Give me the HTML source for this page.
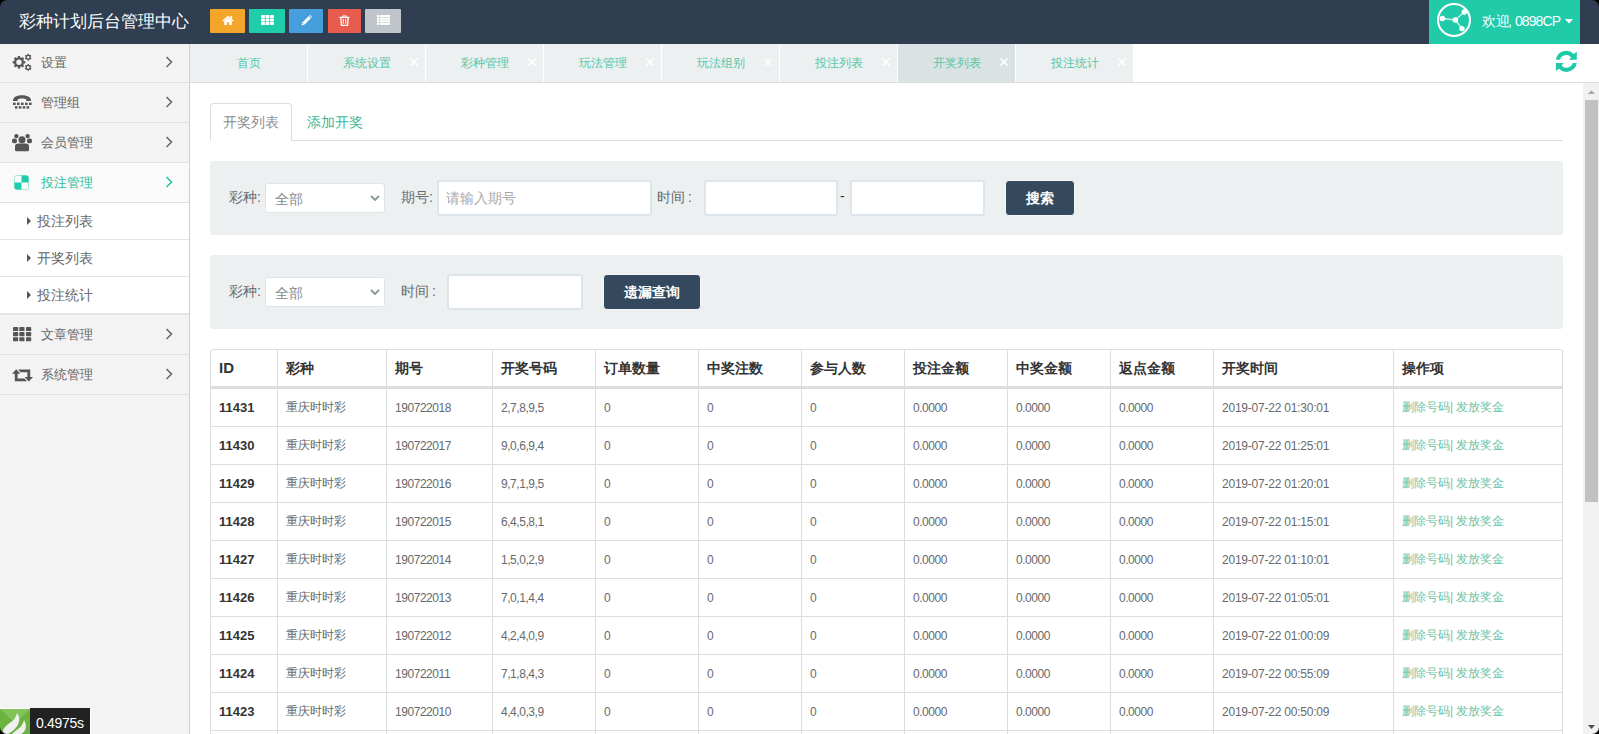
<!DOCTYPE html>
<html><head><meta charset="utf-8">
<style>
*{box-sizing:border-box;margin:0;padding:0}
html,body{width:1599px;height:734px;overflow:hidden;background:#fff;font-family:"Liberation Sans",sans-serif;color:#676a6c}
.abs{position:absolute}
svg{display:block}
#hdr{position:absolute;left:0;top:0;width:1599px;height:44px;background:#2f3e50}
#hdr .title{position:absolute;left:19px;top:10px;font-size:17px;line-height:24px;color:#fff;white-space:nowrap}
.hb{position:absolute;top:9px;height:24px;border-radius:1px}
.hb svg{position:absolute}
#welcome{position:absolute;left:1429px;top:0;width:151px;height:44px;background:#21cbaa}
#welcome .txt{position:absolute;left:53px;top:12px;font-size:14px;line-height:18px;color:#fff;white-space:nowrap}
#side{position:absolute;left:0;top:44px;width:190px;height:690px;background:#f3f3f3;border-right:1px solid #cfcfcf}
.mi{position:absolute;left:0;width:189px;border-bottom:1px solid #e1e1e1;font-size:13px;color:#666}
.mi .t{position:absolute;left:41px;white-space:nowrap}
.mi .chev{position:absolute;left:165px;width:8px;height:12px}
.sub{position:absolute;left:0;width:189px;background:#fff;border-bottom:1px solid #e4e4e4;font-size:14px;color:#666}
.sub .t{position:absolute;left:37px;white-space:nowrap}
.sub .tri{position:absolute;left:27px;width:0;height:0;border-left:4px solid #555;border-top:4px solid transparent;border-bottom:4px solid transparent}
#tabs{position:absolute;left:190px;top:44px;width:1409px;height:39px;background:#fff;border-bottom:1px solid #dcdcdc}
.tab{position:absolute;top:0;height:38px;width:117px;background:#ecf0f1;font-size:12px;line-height:38px;color:#55c7a7;text-align:center}
.tab .x{position:absolute;right:6px;top:13px;width:10px;height:10px}
#content{position:absolute;left:190px;top:83px;width:1393px;height:651px;background:#fff;overflow:hidden}
#sb{position:absolute;left:1583px;top:83px;width:16px;height:651px;background:#f1f1f1}
.ic{position:absolute;display:block;line-height:0}
.mi.act{background:#fafafa;color:#2bbf9c}
.ntab{position:absolute;z-index:1;left:20px;top:20px;width:82px;height:38px;border:1px solid #ddd;border-bottom:none;border-radius:4px 4px 0 0;background:#fff;font-size:14px;color:#8c8c8c}
.nline{position:absolute;left:20px;top:57px;width:1353px;height:1px;background:#ddd}
.panel{position:absolute;left:20px;width:1353px;height:74px;background:#ecf0f1;border-radius:3px}
.lbl{position:absolute;font-size:14px;color:#676a6c;white-space:nowrap}
.sel{position:absolute;height:30px;background:#fff;border:1px solid #dde4ea;border-radius:3px;font-size:14px;color:#858a8c}
.inp{position:absolute;height:36px;background:#fff;border:2px solid #dde4ec;border-radius:3px;font-size:14px;color:#aaa}
.btn{position:absolute;height:36px;background:#34495e;border:1px solid #f7f9f9;border-radius:4px;color:#fff;font-size:14px;font-weight:bold;text-align:center;line-height:34px}
table.dt{position:absolute;left:20px;top:266px;border-collapse:separate;border-spacing:0;table-layout:fixed;width:1353px;border-top:1px solid #ddd;border-left:1px solid #ddd;border-radius:4px 4px 0 0}
.dt th,.dt td{border-right:1px solid #ddd;border-bottom:1px solid #ddd;text-align:left;padding:0 0 0 8px;white-space:nowrap;overflow:hidden}
.dt th{height:39px;padding-top:2px;font-size:14px;font-weight:bold;color:#333;border-bottom:3px solid #ddd}
.dt td{height:38px;font-size:12px;color:#676a6c}
.dt td.n{letter-spacing:-0.45px}
.dt td.d{letter-spacing:-0.22px}
.dt td.id{font-weight:bold;color:#333;font-size:13px;letter-spacing:0}
.dt td.op{color:#6ec2a5}
.corner{position:absolute;width:8px;height:8px}
</style></head><body>
<div id="hdr">
  <div class="title">彩种计划后台管理中心</div>
  <div class="hb" style="left:210px;width:35px;background:#f4a62a"><svg width="12" height="10" viewBox="0 0 12 10" style="left:12px;top:6px"><path d="M0.3 5.6L6 0.8L11.7 5.6L10.9 6.5L6 2.4L1.1 6.5Z" fill="#fff"/><rect x="8.4" y="1" width="1.7" height="2.8" fill="#fff"/><path d="M2.2 5.8L6 2.7L9.8 5.8V10H7.1V7.2H4.9V10H2.2Z" fill="#fff"/></svg></div>
  <div class="hb" style="left:249px;width:36px;background:#1fcdaa"><svg width="13" height="10" viewBox="0 0 13 10" style="left:12px;top:6px"><rect x="0" y="0" width="3.9" height="3" rx="0.5" fill="#fff"/><rect x="0" y="3.5" width="3.9" height="3" rx="0.5" fill="#fff"/><rect x="0" y="7" width="3.9" height="3" rx="0.5" fill="#fff"/><rect x="4.5" y="0" width="3.9" height="3" rx="0.5" fill="#fff"/><rect x="4.5" y="3.5" width="3.9" height="3" rx="0.5" fill="#fff"/><rect x="4.5" y="7" width="3.9" height="3" rx="0.5" fill="#fff"/><rect x="9" y="0" width="3.9" height="3" rx="0.5" fill="#fff"/><rect x="9" y="3.5" width="3.9" height="3" rx="0.5" fill="#fff"/><rect x="9" y="7" width="3.9" height="3" rx="0.5" fill="#fff"/></svg></div>
  <div class="hb" style="left:289px;width:34px;background:#469fdc"><svg width="11" height="11" viewBox="0 0 11 11" style="left:12px;top:6px"><path d="M0.6 10.4L1.3 7.6L7.8 1.1L9.9 3.2L3.4 9.7Z" fill="#fff"/><path d="M8.5 0.4L9.1 -0.2L11.2 1.9L10.6 2.5Z" fill="#fff"/><path d="M1.3 7.6L3.4 9.7" stroke="#469fdc" stroke-width="0.6"/></svg></div>
  <div class="hb" style="left:328px;width:33px;background:#e85c4e"><svg width="11" height="11" viewBox="0 0 11 11" style="left:11px;top:6px"><path d="M0.5 2.4H10.5" stroke="#fff" stroke-width="1.3"/><path d="M3.8 2.2V0.9H7.2V2.2" fill="none" stroke="#fff" stroke-width="1"/><path d="M1.9 2.6L2.4 10.3H8.6L9.1 2.6" fill="none" stroke="#fff" stroke-width="1.3"/><path d="M4.3 4V8.8M6.7 4V8.8" stroke="#fff" stroke-width="1"/></svg></div>
  <div class="hb" style="left:365px;width:36px;background:#bfc5ca"><svg width="13" height="10" viewBox="0 0 13 10" style="left:12px;top:6px"><rect x="0" y="0" width="2.4" height="2.1" fill="#fff"/><rect x="2.9" y="0" width="10.1" height="2.1" fill="#fff"/><rect x="0" y="2.6" width="2.4" height="2.1" fill="#fff"/><rect x="2.9" y="2.6" width="10.1" height="2.1" fill="#fff"/><rect x="0" y="5.2" width="2.4" height="2.1" fill="#fff"/><rect x="2.9" y="5.2" width="10.1" height="2.1" fill="#fff"/><rect x="0" y="7.8" width="2.4" height="2.1" fill="#fff"/><rect x="2.9" y="7.8" width="10.1" height="2.1" fill="#fff"/></svg></div>
</div>
<div id="welcome"><svg width="36" height="36" viewBox="0 0 36 36" style="position:absolute;left:7px;top:2px"><circle cx="18" cy="18" r="16" fill="none" stroke="#fff" stroke-width="2"/><path d="M6.4 16.5L19.4 18L28.3 10M19.4 18L26 26.6" stroke="#fff" stroke-width="1.5" stroke-opacity="0.7" fill="none"/><circle cx="6.4" cy="16.5" r="2.8" fill="#fff"/><circle cx="19.4" cy="18" r="2.8" fill="#fff"/><circle cx="28.3" cy="10" r="2.7" fill="#fff"/><circle cx="26" cy="26.6" r="2.7" fill="#fff"/></svg><div class="txt">欢迎<span style="margin-left:-2px">,</span><span style="letter-spacing:-0.9px;margin-left:3px">0898CP</span></div><svg width="8" height="5" viewBox="0 0 8 5" style="position:absolute;left:136px;top:19px"><path d="M0 0H8L4 4.5Z" fill="#fff"/></svg></div>
<div id="side">
  <div class="mi" style="top:0;height:39px"><span class="ic" style="left:12px;top:9px"><svg width="21" height="19" viewBox="0 0 21 19" style=""><circle cx="7" cy="9.3" r="3.85" fill="none" stroke="#555" stroke-width="2.3"/><rect x="5.85" y="3.000000000000001" width="2.3" height="1.8" fill="#555" transform="rotate(0.0 7 9.3)"/><rect x="5.85" y="3.000000000000001" width="2.3" height="1.8" fill="#555" transform="rotate(45.0 7 9.3)"/><rect x="5.85" y="3.000000000000001" width="2.3" height="1.8" fill="#555" transform="rotate(90.0 7 9.3)"/><rect x="5.85" y="3.000000000000001" width="2.3" height="1.8" fill="#555" transform="rotate(135.0 7 9.3)"/><rect x="5.85" y="3.000000000000001" width="2.3" height="1.8" fill="#555" transform="rotate(180.0 7 9.3)"/><rect x="5.85" y="3.000000000000001" width="2.3" height="1.8" fill="#555" transform="rotate(225.0 7 9.3)"/><rect x="5.85" y="3.000000000000001" width="2.3" height="1.8" fill="#555" transform="rotate(270.0 7 9.3)"/><rect x="5.85" y="3.000000000000001" width="2.3" height="1.8" fill="#555" transform="rotate(315.0 7 9.3)"/><circle cx="16.2" cy="4.2" r="1.9500000000000002" fill="none" stroke="#555" stroke-width="1.3"/><rect x="15.5" y="0.8" width="1.4" height="1.3" fill="#555" transform="rotate(0.0 16.2 4.2)"/><rect x="15.5" y="0.8" width="1.4" height="1.3" fill="#555" transform="rotate(60.0 16.2 4.2)"/><rect x="15.5" y="0.8" width="1.4" height="1.3" fill="#555" transform="rotate(120.0 16.2 4.2)"/><rect x="15.5" y="0.8" width="1.4" height="1.3" fill="#555" transform="rotate(180.0 16.2 4.2)"/><rect x="15.5" y="0.8" width="1.4" height="1.3" fill="#555" transform="rotate(240.0 16.2 4.2)"/><rect x="15.5" y="0.8" width="1.4" height="1.3" fill="#555" transform="rotate(300.0 16.2 4.2)"/><circle cx="16.2" cy="14.4" r="1.9500000000000002" fill="none" stroke="#555" stroke-width="1.3"/><rect x="15.5" y="11.0" width="1.4" height="1.3" fill="#555" transform="rotate(0.0 16.2 14.4)"/><rect x="15.5" y="11.0" width="1.4" height="1.3" fill="#555" transform="rotate(60.0 16.2 14.4)"/><rect x="15.5" y="11.0" width="1.4" height="1.3" fill="#555" transform="rotate(120.0 16.2 14.4)"/><rect x="15.5" y="11.0" width="1.4" height="1.3" fill="#555" transform="rotate(180.0 16.2 14.4)"/><rect x="15.5" y="11.0" width="1.4" height="1.3" fill="#555" transform="rotate(240.0 16.2 14.4)"/><rect x="15.5" y="11.0" width="1.4" height="1.3" fill="#555" transform="rotate(300.0 16.2 14.4)"/></svg></span><span class="t" style="top:10px">设置</span><span class="chev" style="top:12px"><svg width="8" height="12" viewBox="0 0 8 12" style=""><path d="M1.5 1 L6.5 6 L1.5 11" fill="none" stroke="#666" stroke-width="1.5"/></svg></span></div>
  <div class="mi" style="top:39px;height:40px"><span class="ic" style="left:12px;top:11px"><svg width="20" height="16" viewBox="0 0 20 16" style=""><path d="M1 6.5C1 3.5 4 1.2 10 1.2C16 1.2 19 3.5 19 6.5V7H14.3V5.3C13 4.7 11.8 4.5 10 4.5C8.2 4.5 7 4.7 5.7 5.3V7H1Z" fill="#555"/><rect x="1" y="8.6" width="2.6" height="2.4" fill="#555"/><rect x="5" y="8.6" width="2.6" height="2.4" fill="#555"/><rect x="9" y="8.6" width="2.6" height="2.4" fill="#555"/><rect x="13" y="8.6" width="2.6" height="2.4" fill="#555"/><rect x="17" y="8.6" width="2.6" height="2.4" fill="#555"/><rect x="2.9" y="12.2" width="2.6" height="2.4" fill="#555"/><rect x="6.8" y="12.2" width="2.6" height="2.4" fill="#555"/><rect x="10.7" y="12.2" width="2.6" height="2.4" fill="#555"/><rect x="14.6" y="12.2" width="2.6" height="2.4" fill="#555"/></svg></span><span class="t" style="top:11px">管理组</span><span class="chev" style="top:13px"><svg width="8" height="12" viewBox="0 0 8 12" style=""><path d="M1.5 1 L6.5 6 L1.5 11" fill="none" stroke="#666" stroke-width="1.5"/></svg></span></div>
  <div class="mi" style="top:79px;height:40px"><span class="ic" style="left:12px;top:10px"><svg width="20" height="19" viewBox="0 0 20 19" style=""><circle cx="4.4" cy="3.1" r="2.2" fill="#555"/><circle cx="15.6" cy="3.1" r="2.2" fill="#555"/><rect x="0" y="5.6" width="5" height="4.6" rx="1.8" fill="#555"/><rect x="15" y="5.6" width="5" height="4.6" rx="1.8" fill="#555"/><circle cx="10" cy="6.7" r="3.5" fill="#555"/><path d="M3 13.2C3 11.5 4.5 10.6 6 10.6H14C15.5 10.6 17 11.5 17 13.2V17C17 17.8 16.4 18.2 15.6 18.2H4.4C3.6 18.2 3 17.8 3 17Z" fill="#555"/></svg></span><span class="t" style="top:11px">会员管理</span><span class="chev" style="top:13px"><svg width="8" height="12" viewBox="0 0 8 12" style=""><path d="M1.5 1 L6.5 6 L1.5 11" fill="none" stroke="#666" stroke-width="1.5"/></svg></span></div>
  <div class="mi act" style="top:119px;height:40px"><span class="ic" style="left:14px;top:12px"><svg width="15" height="15" viewBox="0 0 16 16" style=""><rect x="0.5" y="0.5" width="15" height="15" rx="2.5" fill="#fff" stroke="#9fe0d1" stroke-width="1"/><path d="M8 0.5H13A2.5 2.5 0 0 1 15.5 3V8H8Z" fill="#1fcdaa"/><path d="M0.5 8H8V15.5H3A2.5 2.5 0 0 1 0.5 13Z" fill="#1fcdaa"/></svg></span><span class="t" style="top:11px">投注管理</span><span class="chev" style="top:13px"><svg width="8" height="12" viewBox="0 0 8 12" style=""><path d="M1.5 1 L6.5 6 L1.5 11" fill="none" stroke="#1fc4a4" stroke-width="1.5"/></svg></span></div>
  <div class="sub" style="top:159px;height:37px"><span class="tri" style="top:14px"></span><span class="t" style="top:10px">投注列表</span></div>
  <div class="sub" style="top:196px;height:37px"><span class="tri" style="top:14px"></span><span class="t" style="top:10px">开奖列表</span></div>
  <div class="sub" style="top:233px;height:38px;border-bottom-width:2px"><span class="tri" style="top:14px"></span><span class="t" style="top:10px">投注统计</span></div>
  <div class="mi" style="top:271px;height:40px"><span class="ic" style="left:13px;top:12px"><svg width="19" height="15" viewBox="0 0 19 15" style=""><rect x="0" y="0" width="5.2" height="4.1" rx="0.7" fill="#555"/><rect x="0" y="5.1" width="5.2" height="4.1" rx="0.7" fill="#555"/><rect x="0" y="10.2" width="5.2" height="4.1" rx="0.7" fill="#555"/><rect x="6.3" y="0" width="5.2" height="4.1" rx="0.7" fill="#555"/><rect x="6.3" y="5.1" width="5.2" height="4.1" rx="0.7" fill="#555"/><rect x="6.3" y="10.2" width="5.2" height="4.1" rx="0.7" fill="#555"/><rect x="13" y="0" width="5.2" height="4.1" rx="0.7" fill="#555"/><rect x="13" y="5.1" width="5.2" height="4.1" rx="0.7" fill="#555"/><rect x="13" y="10.2" width="5.2" height="4.1" rx="0.7" fill="#555"/></svg></span><span class="t" style="top:11px">文章管理</span><span class="chev" style="top:13px"><svg width="8" height="12" viewBox="0 0 8 12" style=""><path d="M1.5 1 L6.5 6 L1.5 11" fill="none" stroke="#666" stroke-width="1.5"/></svg></span></div>
  <div class="mi" style="top:311px;height:40px"><span class="ic" style="left:12px;top:14px"><svg width="21" height="13" viewBox="0 0 21 13" style=""><path d="M4.2 0.2L8.4 4.7H5.6V9.5H12.4L15 12.3H2.8V4.7H0Z" fill="#555"/><path d="M16.8 12.6L12.6 8.1H15.4V3.3H8.6L6 0.5H18.2V8.1H21Z" fill="#555"/></svg></span><span class="t" style="top:11px">系统管理</span><span class="chev" style="top:13px"><svg width="8" height="12" viewBox="0 0 8 12" style=""><path d="M1.5 1 L6.5 6 L1.5 11" fill="none" stroke="#666" stroke-width="1.5"/></svg></span></div>
  <div class="abs" style="left:0;top:664px;width:91px;height:26px;background:#fff"></div>
  <div class="abs" style="left:0;top:665px;width:30px;height:25px;background:#6db33f;overflow:hidden"><svg width="30" height="25" viewBox="0 0 30 25" style=""><path d="M0 0H30L15 14Z" fill="#82c45a"/><path d="M3 21C7 13 15 14 17 4C22 10 19 19 8 25H4Z" fill="#f0f0f0"/><path d="M12 25C17 20 22 19 24 11C28 18 25 23 21 25Z" fill="#f0f0f0"/></svg></div>
  <div class="abs" style="left:30px;top:664px;width:60px;height:26px;background:#222;color:#fff;font-size:14px;line-height:30px;padding-left:6px;letter-spacing:-0.3px">0.4975s</div>
</div>
<div id="tabs">
  <div class="tab" style="left:0px">首页</div>
  <div class="tab" style="left:118px">系统设置<svg class="x" viewBox="0 0 10 10"><path d="M1.5 1.5L8.5 8.5M8.5 1.5L1.5 8.5" stroke="#fff" stroke-width="1.6"/></svg></div>
  <div class="tab" style="left:236px">彩种管理<svg class="x" viewBox="0 0 10 10"><path d="M1.5 1.5L8.5 8.5M8.5 1.5L1.5 8.5" stroke="#fff" stroke-width="1.6"/></svg></div>
  <div class="tab" style="left:354px">玩法管理<svg class="x" viewBox="0 0 10 10"><path d="M1.5 1.5L8.5 8.5M8.5 1.5L1.5 8.5" stroke="#fff" stroke-width="1.6"/></svg></div>
  <div class="tab" style="left:472px">玩法组别<svg class="x" viewBox="0 0 10 10"><path d="M1.5 1.5L8.5 8.5M8.5 1.5L1.5 8.5" stroke="#fff" stroke-width="1.6"/></svg></div>
  <div class="tab" style="left:590px">投注列表<svg class="x" viewBox="0 0 10 10"><path d="M1.5 1.5L8.5 8.5M8.5 1.5L1.5 8.5" stroke="#fff" stroke-width="1.6"/></svg></div>
  <div class="tab" style="left:708px;background:#dae2e4">开奖列表<svg class="x" viewBox="0 0 10 10"><path d="M1.5 1.5L8.5 8.5M8.5 1.5L1.5 8.5" stroke="#fff" stroke-width="1.6"/></svg></div>
  <div class="tab" style="left:826px">投注统计<svg class="x" viewBox="0 0 10 10"><path d="M1.5 1.5L8.5 8.5M8.5 1.5L1.5 8.5" stroke="#fff" stroke-width="1.6"/></svg></div>
  <svg width="23" height="23" viewBox="0 0 23 23" style="position:absolute;left:1365px;top:6px"><path d="M0.93 9.7A10.55 10.55 0 0 1 18.8 3.9L21.8 1.8V9.7H14L16.2 7.3A6.65 6.65 0 0 0 4.9 9.7Z" fill="#1fcaa8"/><path d="M0.93 9.7A10.55 10.55 0 0 1 18.8 3.9L21.8 1.8V9.7H14L16.2 7.3A6.65 6.65 0 0 0 4.9 9.7Z" fill="#1fcaa8" transform="rotate(180 11.35 11.35)"/></svg>
</div>
<div id="content">
  <div class="ntab"><span class="abs" style="left:12px;top:10px">开奖列表</span></div>
  <div class="abs" style="left:117px;top:31px;font-size:14px;color:#3fb897">添加开奖</div>
  <div class="nline"></div>
  <div class="panel" style="top:78px">
    <span class="lbl" style="left:19px;top:28px">彩种:</span>
    <div class="sel" style="left:55px;top:22px;width:120px"><span class="abs" style="left:9px;top:7px">全部</span><svg width="10" height="8" viewBox="0 0 10 8" style="position:absolute;left:104px;top:10px"><path d="M1 2L5 6L9 2" fill="none" stroke="#869796" stroke-width="1.8"/></svg></div>
    <span class="lbl" style="left:191px;top:28px">期号:</span>
    <div class="inp" style="left:227px;top:19px;width:215px"><span class="abs" style="left:7px;top:8px">请输入期号</span></div>
    <span class="lbl" style="left:447px;top:28px">时间<span style="margin-left:3px">:</span></span>
    <div class="inp" style="left:494px;top:19px;width:134px"></div>
    <span class="lbl" style="left:630px;top:27px;color:#333">-</span>
    <div class="inp" style="left:640px;top:19px;width:135px"></div>
    <div class="btn" style="left:795px;top:19px;width:70px">搜索</div>
  </div>
  <div class="panel" style="top:172px">
    <span class="lbl" style="left:19px;top:28px">彩种:</span>
    <div class="sel" style="left:55px;top:22px;width:120px"><span class="abs" style="left:9px;top:7px">全部</span><svg width="10" height="8" viewBox="0 0 10 8" style="position:absolute;left:104px;top:10px"><path d="M1 2L5 6L9 2" fill="none" stroke="#869796" stroke-width="1.8"/></svg></div>
    <span class="lbl" style="left:191px;top:28px">时间<span style="margin-left:3px">:</span></span>
    <div class="inp" style="left:237px;top:19px;width:136px"></div>
    <div class="btn" style="left:393px;top:19px;width:98px">遗漏查询</div>
  </div>
  <table class="dt"><colgroup><col style="width:67px"><col style="width:109px"><col style="width:106px"><col style="width:103px"><col style="width:103px"><col style="width:103px"><col style="width:103px"><col style="width:103px"><col style="width:103px"><col style="width:103px"><col style="width:180px"><col style="width:169px"></colgroup>
  <tr><th><span style="font-size:15px;position:relative;top:-2px">ID</span></th><th>彩种</th><th>期号</th><th>开奖号码</th><th>订单数量</th><th>中奖注数</th><th>参与人数</th><th>投注金额</th><th>中奖金额</th><th>返点金额</th><th>开奖时间</th><th>操作项</th></tr>
  <tr><td class="id">11431</td><td>重庆时时彩</td><td class="n">190722018</td><td class="n">2,7,8,9,5</td><td>0</td><td>0</td><td>0</td><td class="n">0.0000</td><td class="n">0.0000</td><td class="n">0.0000</td><td class="d">2019-07-22 01:30:01</td><td class="op">删除号码| 发放奖金</td></tr>
  <tr><td class="id">11430</td><td>重庆时时彩</td><td class="n">190722017</td><td class="n">9,0,6,9,4</td><td>0</td><td>0</td><td>0</td><td class="n">0.0000</td><td class="n">0.0000</td><td class="n">0.0000</td><td class="d">2019-07-22 01:25:01</td><td class="op">删除号码| 发放奖金</td></tr>
  <tr><td class="id">11429</td><td>重庆时时彩</td><td class="n">190722016</td><td class="n">9,7,1,9,5</td><td>0</td><td>0</td><td>0</td><td class="n">0.0000</td><td class="n">0.0000</td><td class="n">0.0000</td><td class="d">2019-07-22 01:20:01</td><td class="op">删除号码| 发放奖金</td></tr>
  <tr><td class="id">11428</td><td>重庆时时彩</td><td class="n">190722015</td><td class="n">6,4,5,8,1</td><td>0</td><td>0</td><td>0</td><td class="n">0.0000</td><td class="n">0.0000</td><td class="n">0.0000</td><td class="d">2019-07-22 01:15:01</td><td class="op">删除号码| 发放奖金</td></tr>
  <tr><td class="id">11427</td><td>重庆时时彩</td><td class="n">190722014</td><td class="n">1,5,0,2,9</td><td>0</td><td>0</td><td>0</td><td class="n">0.0000</td><td class="n">0.0000</td><td class="n">0.0000</td><td class="d">2019-07-22 01:10:01</td><td class="op">删除号码| 发放奖金</td></tr>
  <tr><td class="id">11426</td><td>重庆时时彩</td><td class="n">190722013</td><td class="n">7,0,1,4,4</td><td>0</td><td>0</td><td>0</td><td class="n">0.0000</td><td class="n">0.0000</td><td class="n">0.0000</td><td class="d">2019-07-22 01:05:01</td><td class="op">删除号码| 发放奖金</td></tr>
  <tr><td class="id">11425</td><td>重庆时时彩</td><td class="n">190722012</td><td class="n">4,2,4,0,9</td><td>0</td><td>0</td><td>0</td><td class="n">0.0000</td><td class="n">0.0000</td><td class="n">0.0000</td><td class="d">2019-07-22 01:00:09</td><td class="op">删除号码| 发放奖金</td></tr>
  <tr><td class="id">11424</td><td>重庆时时彩</td><td class="n">190722011</td><td class="n">7,1,8,4,3</td><td>0</td><td>0</td><td>0</td><td class="n">0.0000</td><td class="n">0.0000</td><td class="n">0.0000</td><td class="d">2019-07-22 00:55:09</td><td class="op">删除号码| 发放奖金</td></tr>
  <tr><td class="id">11423</td><td>重庆时时彩</td><td class="n">190722010</td><td class="n">4,4,0,3,9</td><td>0</td><td>0</td><td>0</td><td class="n">0.0000</td><td class="n">0.0000</td><td class="n">0.0000</td><td class="d">2019-07-22 00:50:09</td><td class="op">删除号码| 发放奖金</td></tr>
  <tr><td class="id">11422</td><td>重庆时时彩</td><td class="n">190722009</td><td class="n">1,2,3,4,5</td><td>0</td><td>0</td><td>0</td><td class="n">0.0000</td><td class="n">0.0000</td><td class="n">0.0000</td><td class="d">2019-07-22 00:45:09</td><td class="op">删除号码| 发放奖金</td></tr>
  </table>
</div>
<div id="sb">
  <svg width="16" height="8" style="position:absolute;left:0;top:7px"><path d="M5 4H12L8.5 0.5Z" fill="#a3a3a3"/></svg>
  <div class="abs" style="left:2px;top:17px;width:13px;height:402px;background:#c1c1c1"></div>
  <svg width="16" height="8" style="position:absolute;left:0;top:642px"><path d="M5 0H12L8.5 4Z" fill="#505050"/></svg>
</div>
<svg class="corner" style="left:0;top:0" viewBox="0 0 8 8"><path d="M0 0H7A7 7 0 0 0 0 7Z" fill="#000"/></svg>
<svg class="corner" style="left:1591px;top:0" viewBox="0 0 8 8"><path d="M8 0H1A7 7 0 0 1 8 7Z" fill="#000"/></svg>
<svg class="corner" style="left:0;top:726px" viewBox="0 0 8 8"><path d="M0 8H7A7 7 0 0 1 0 1Z" fill="#000"/></svg>
<svg class="corner" style="left:1591px;top:726px" viewBox="0 0 8 8"><path d="M8 8H1A7 7 0 0 0 8 1Z" fill="#000"/></svg>
</body></html>
